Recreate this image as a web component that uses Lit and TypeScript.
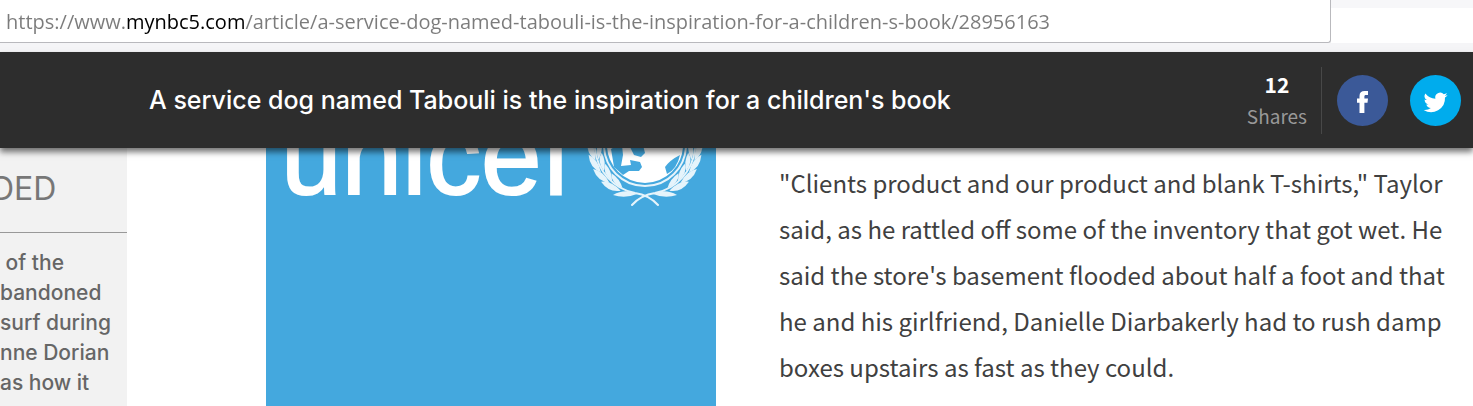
import { LitElement, html, css, svg } from "lit";
import { customElement } from "lit/decorators.js";

@customElement("address-bar")
class AddressBar extends LitElement {
  static styles = css`
    :host { display: block; background: #f5f5f7; }
    .row { display: flex; height: 43px; }
    .field {
      flex: 1; box-sizing: border-box; display: flex; align-items: center;
      background: #fff; border-right: 1px solid #b9b9bd; border-bottom: 1px solid #b9b9bd;
      border-bottom-right-radius: 3px;
    }
    .url {
      flex: 1; min-width: 0; border: 0; padding: 0 0 0 6px; outline: none; height: 40px;
      font: 20px "Open Sans", "Noto Sans", sans-serif; color: #7b7b7b;
      background: linear-gradient(to right, #7b7b7b 126px, #000 126px, #000 244px, #7b7b7b 244px);
      background-clip: text; -webkit-background-clip: text;
      -webkit-text-fill-color: transparent;
    }
    .tools { width: 142px; box-sizing: border-box; border-top: 8px solid #f7f7f9; background: #fff; }
    .strip { height: 9px; }
  `;
  render() {
    return html`
      <div class="row">
        <div class="field">
          <input class="url" aria-label="Address" readonly
            value="https://www.mynbc5.com/article/a-service-dog-named-tabouli-is-the-inspiration-for-a-children-s-book/28956163">
        </div>
        <div class="tools"></div>
      </div>
      <div class="strip"></div>`;
  }
}

@customElement("share-header")
class ShareHeader extends LitElement {
  static styles = css`
    :host {
      display: flex; align-items: center; position: relative; z-index: 1;
      height: 96px; background: #2d2d2d; box-shadow: 0 4px 6px rgba(0, 0, 0, 0.55);
      padding: 0 12px 0 149px; color: #fff;
    }
    .title { flex: 1; margin: 0; font: 500 25px/32px Inter, sans-serif; }
    .shares {
      display: flex; flex-direction: column; align-items: center;
      padding-right: 14px; border-right: 1px solid #484848; height: 67px; justify-content: center;
      font: 19px/32px "Noto Sans CJK SC", sans-serif; color: #999;
    }
    .count { font-size: 21px; font-weight: 700; color: #fff; }
    .links { display: flex; gap: 22px; padding-left: 15px; }
    .social { display: block; width: 51px; height: 51px; border-radius: 50%; }
    .facebook { background: #3b5998; }
    .twitter { background: #00aced; }
    svg { display: block; width: 51px; height: 51px; fill: #fff; }
  `;
  render() {
    return html`
      <h1 class="title">A service dog named Tabouli is the inspiration for a children's book</h1>
      <div class="shares"><span class="count">12</span><span>Shares</span></div>
      <nav class="links">
        <a class="social facebook" href="#facebook" aria-label="Share on Facebook">
          <svg viewBox="0 0 51 51"><path d="M22.500 38V27.700h-2.500v-4.200h2.500v-2.600c0-3.400 1.800-5 5.200-5h3.300v4.200h-2c-1.200 0-1.600.5-1.600 1.500v1.900h3.600l-.5 4.200h-3.100V38z"/></svg>
        </a>
        <a class="social twitter" href="#twitter" aria-label="Share on Twitter">
          <svg viewBox="0 0 51 51"><g transform="translate(14 16)"><path d="M23.600 3.900a9.700 9.700 0 0 1-2.800.8 4.900 4.900 0 0 0 2.100-2.700 9.900 9.900 0 0 1-3.100 1.200 4.900 4.900 0 0 0-8.400 4.500A13.900 13.900 0 0 1 1.300 2.600a4.900 4.900 0 0 0 1.500 6.500 4.800 4.800 0 0 1-2.200-.6v.1a4.900 4.900 0 0 0 3.900 4.800 4.900 4.900 0 0 1-2.200.1 4.900 4.900 0 0 0 4.600 3.400A9.900 9.900 0 0 1-.4 18.900 13.900 13.900 0 0 0 21 6.500a10 10 0 0 0 2.600-2.600z"/></g></svg>
        </a>
      </nav>`;
  }
}

/* Leaves of one side of the laurel wreath, in degrees around the globe's centre. */
const leafAngles = [-8, 7, 22, 37, 52];

@customElement("unicef-picture")
class UnicefPicture extends LitElement {
  static styles = css`
    :host { display: block; background: #44a8de; overflow: hidden; }
    svg { display: block; width: 100%; height: 258px; }
    .word { font: 109px "Liberation Sans", Arial, sans-serif; fill: #fff; stroke: #fff; stroke-width: 2; }
    .leaf { fill: #e6f4fb; }
    .line { fill: none; stroke: #e6f4fb; stroke-width: 2; stroke-linecap: round; }
    .globe { fill: #fff; }
    .sea { fill: #44a8de; }
  `;
  side() {
    return svg`
      <path class="line" d="M-50 4A50 50 0 0 0-10 48Q4 50 13 60"/>
      ${leafAngles.map((a) => svg`
        <g transform=${`rotate(${-a})`}>
          <path class="leaf" d="M-51 9Q-60 1-56-12Q-49-5-51 9z"/>
          <path class="leaf" d="M-48 9Q-51-4-43-9Q-42 1-48 9z"/>
        </g>`)}
      <path class="leaf" d="M-8 49Q-20 43-32 50Q-20 54-8 49z"/>`;
  }
  render() {
    return html`
      <svg viewBox="0 0 450 258" preserveAspectRatio="xMinYMin slice" role="img" aria-label="unicef">
        <text class="word" x="15" y="46">unicef</text>
        <g transform="translate(379 -3)">
          ${this.side()}
          <g transform="scale(-1 1)">${this.side()}</g>
          <circle class="line" r="41"/>
          <circle class="globe" r="38"/>
          <path class="sea" d="M-27 0H-23L-22 10-24 21-14 20-15 15-5 17-3 22-6 26-16 26-22 30-31 22-34 4z"/>
          <path class="sea" d="M-16 0H-2L0 8-4 12-11 10z"/>
          <path class="sea" d="M35 10Q25 15 20 22L22 29Q32 24 35 10z"/>
        </g>
      </svg>`;
  }
}

@customElement("app-root")
class AppRoot extends LitElement {
  static styles = css`
    :host { display: block; height: 100vh; overflow: hidden; background: #fff; }
    .page { display: grid; grid-template-columns: 127px 139px 450px minmax(0, 1fr); }
    .side {
      background: #f2f2f2; overflow: hidden;
      font: 500 21px/30px Inter, sans-serif; color: #666; white-space: nowrap;
    }
    .heading {
      margin: 0; padding: 21px 0 23px; border-bottom: 1px solid #999;
      font: 400 32px/40px Inter, sans-serif; color: #777; text-indent: -9px;
    }
    .teaser { margin: 0; padding-top: 15px; }
    .picture { grid-column: 3; }
    .story {
      margin: 0; padding: 12px 16px 0 63px;
      font: 24px/46px "Noto Sans CJK SC", sans-serif; color: #404040;
    }
  `;
  render() {
    return html`
      <address-bar></address-bar>
      <share-header></share-header>
      <main class="page">
        <aside class="side">
          <h2 class="heading">DED</h2>
          <p class="teaser">&nbsp;of the<br>bandoned<br>surf during<br>nne Dorian<br>as how it</p>
        </aside>
        <unicef-picture class="picture"></unicef-picture>
        <p class="story">"Clients product and our product and blank T-shirts," Taylor said, as he rattled off some of the inventory that got wet. He said the store's basement flooded about half a foot and that he and his girlfriend, Danielle Diarbakerly had to rush damp boxes upstairs as fast as they could.</p>
      </main>`;
  }
}
